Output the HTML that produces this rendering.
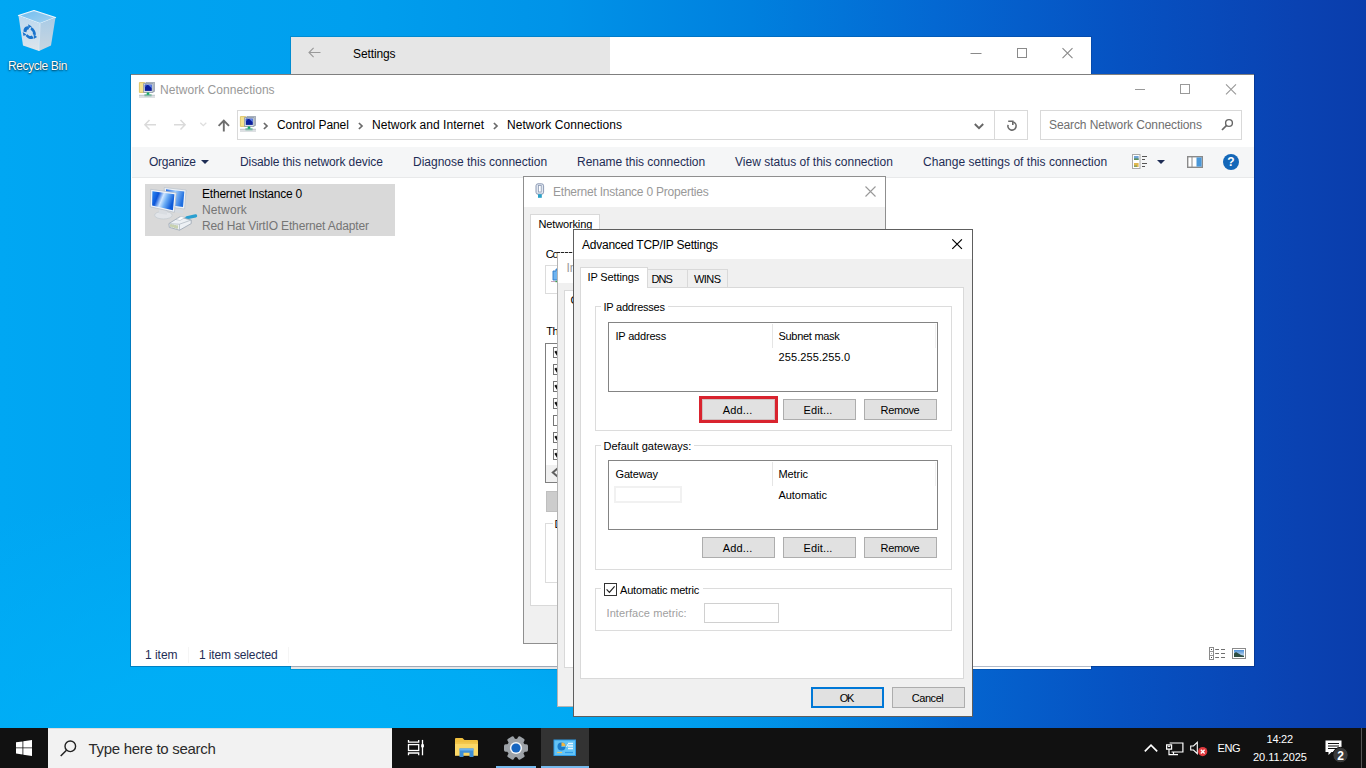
<!DOCTYPE html>
<html><head><meta charset="utf-8"><title>Desktop</title>
<style>
*{box-sizing:border-box;margin:0;padding:0}
html,body{width:1366px;height:768px;overflow:hidden}
body{position:relative;font-family:"Liberation Sans",sans-serif;font-size:12px;
 background:radial-gradient(ellipse 650px 330px at 330px 800px,rgba(0,177,247,.9) 0%,rgba(0,177,247,.75) 45%,rgba(0,177,247,0) 100%),linear-gradient(90deg,#00a7f3 0%,#00a4f1 7.3%,#009fee 25.6%,#0093e8 41%,#0080de 55%,#0468d2 68.4%,#0652c2 82%,#0a42b2 95%,#0a3dac 100%);}
.t{position:absolute;white-space:pre;line-height:16px;height:16px}
.b{position:absolute}
svg{position:absolute;overflow:visible}
.btn{position:absolute;background:#e1e1e1;border:1px solid #adadad;font-size:11px;line-height:19px;text-align:center;color:#000}

</style></head>
<body>
<svg style="left:14px;top:8px" width="46" height="46" viewBox="0 0 46 46">
<defs><linearGradient id="rb1" x1="0" y1="0" x2="0" y2="1"><stop offset="0" stop-color="#bdd8ee"/><stop offset=".6" stop-color="#cfe0ee"/><stop offset="1" stop-color="#dfe5ea"/></linearGradient>
<linearGradient id="rb2" x1="0" y1="0" x2="1" y2="1"><stop offset="0" stop-color="#6fbdf0"/><stop offset="1" stop-color="#a4d0ee"/></linearGradient>
<linearGradient id="rb3" x1="0" y1="0" x2="0" y2="1"><stop offset="0" stop-color="#a9cbe6"/><stop offset="1" stop-color="#c9d6e0"/></linearGradient></defs>
<path d="M4.500 7.500 L20 2.500 L41.500 9.500 L26 15.500 Z" fill="url(#rb2)" stroke="#eef6fc" stroke-width="1.300" stroke-linejoin="round"/>
<path d="M4.500 7.800 L26 15.600 L25 43 L9 37.500 Z" fill="url(#rb1)"/>
<path d="M26 15.600 L41.500 9.600 L37 37.500 L25 43 Z" fill="url(#rb3)"/>
<path d="M26 15.600L25 43" stroke="#e4eef6" stroke-width=".8"/>
<g transform="translate(15.700 24.600) skewY(16)">
<circle r="4.700" fill="none" stroke="#1a73cc" stroke-width="3" stroke-dasharray="6.900 2.940" transform="rotate(-75)"/>
<path d="M-1.500 -7.800l3.600 1.200 -3.300 2.600z M7.400 2.200l-3 2.600 -.6-4.200z M-6.200 5.300l-.8-4 3.800 1.400z" fill="#1a73cc"/>
</g>
</svg>
<span class="t" style="left:8px;top:58px;font-size:12px;color:#fff;letter-spacing:-0.4px;text-shadow:0 1px 2px rgba(0,0,0,.65),0 0 1px rgba(0,0,0,.5);">Recycle Bin</span>
<div class="b" style="left:291px;top:37px;width:800px;height:632px;background:#fff;box-shadow:0 0 0 1px rgba(0,0,0,.12)"></div>
<div class="b" style="left:291px;top:37px;width:319px;height:632px;background:#e6e6e6"></div>
<svg style="left:308px;top:47px" width="13" height="11" viewBox="0 0 13 11"><path d="M12.5 5.5H1M5.6 .8L1 5.5l4.6 4.7" fill="none" stroke="#999" stroke-width="1.1"/></svg>
<span class="t" style="left:353px;top:46px;font-size:12px;color:#000;letter-spacing:-0.11px;">Settings</span>
<svg style="left:970px;top:47px" width="104" height="12" viewBox="0 0 104 12"><path d="M.5 6.5h11" stroke="#8a8a8a" stroke-width="1" fill="none"/><rect x="47.5" y="1.5" width="9" height="9" fill="none" stroke="#8a8a8a"/><path d="M92.5 1.200l10 10M102.500 1.200l-10 10" stroke="#8a8a8a" stroke-width="1.100" fill="none"/></svg>
<div class="b" style="left:131px;top:75px;width:1123px;height:591px;background:#fff;box-shadow:0 0 0 1px rgba(0,30,80,.30)"></div>
<div class="b" style="left:131px;top:74px;width:1123px;height:1px;background:#7f7f7f"></div>
<svg style="left:139px;top:82px" width="16" height="16" viewBox="0 0 16 16"><path d="M.4 .6h5.200l1.300 1.300v8.500H.4z" fill="#f6e28e" stroke="#d9bd55" stroke-width=".8"/><rect x="7" y=".5" width="8.500" height="9" fill="#c5ccd5" stroke="#98a2ae" stroke-width=".8"/><rect x="4.600" y="1.600" width="9.400" height="8.800" fill="#d9dfe7" stroke="#8d98a6" stroke-width=".8"/><rect x="5.800" y="2.700" width="7" height="6.200" fill="#0b1f9c"/><path d="M9 2.700h3.800v3.600z" fill="#5f83e6"/><path d="M5.800 5.500l2.400-2.800H5.800z" fill="#3a5fd0"/><path d="M7.700 10.500h2.600v2h2.300v1.700H5.400v-1.700h2.300z" fill="#15a863"/><path d="M0 13.300h16" stroke="#b3bac2" stroke-width=".9"/><path d="M0 15h16" stroke="#b3bac2" stroke-width=".9"/></svg>
<span class="t" style="left:160px;top:82px;font-size:12px;color:#999;letter-spacing:0.03px;">Network Connections</span>
<svg style="left:1135px;top:84px" width="104" height="12" viewBox="0 0 104 12"><path d="M0 5.5h10" stroke="#999" stroke-width="1" fill="none"/><rect x="45.5" y=".5" width="9" height="9" fill="none" stroke="#999"/><path d="M91 .3l10 10M101 .3l-10 10" stroke="#999" stroke-width="1.1" fill="none"/></svg>
<svg style="left:144px;top:118px" width="90" height="14" viewBox="0 0 90 14"><path d="M12 6.800H.9M5.500 2L.9 6.800l4.600 4.800" fill="none" stroke="#dadada" stroke-width="1.500"/><path d="M30 6.800h11.100M36.500 2l4.600 4.800-4.600 4.800" fill="none" stroke="#dadada" stroke-width="1.500"/><path d="M56.300 4.700l3 3 3-3" fill="none" stroke="#dedede" stroke-width="1.300"/><path d="M79.800 13.600V2.800M74.600 7.800l5.200-5.200 5.200 5.200" fill="none" stroke="#6e6e6e" stroke-width="1.900"/></svg>
<div class="b" style="left:237px;top:110px;width:791px;height:30px;background:#fff;border:1px solid #d9d9d9"></div>
<svg style="left:240px;top:116px" width="16" height="16" viewBox="0 0 16 16"><path d="M.4 .6h5.200l1.300 1.300v8.500H.4z" fill="#f6e28e" stroke="#d9bd55" stroke-width=".8"/><rect x="7" y=".5" width="8.500" height="9" fill="#c5ccd5" stroke="#98a2ae" stroke-width=".8"/><rect x="4.600" y="1.600" width="9.400" height="8.800" fill="#d9dfe7" stroke="#8d98a6" stroke-width=".8"/><rect x="5.800" y="2.700" width="7" height="6.200" fill="#0b1f9c"/><path d="M9 2.700h3.800v3.600z" fill="#5f83e6"/><path d="M5.800 5.500l2.400-2.800H5.800z" fill="#3a5fd0"/><path d="M7.700 10.500h2.600v2h2.300v1.700H5.400v-1.700h2.300z" fill="#15a863"/><path d="M0 13.300h16" stroke="#b3bac2" stroke-width=".9"/><path d="M0 15h16" stroke="#b3bac2" stroke-width=".9"/></svg>
<svg style="left:263px;top:121.5px" width="5" height="8" viewBox="0 0 5 8"><path d="M.9 1L4 4 .9 7" fill="none" stroke="#6a6a6a" stroke-width="1.700"/></svg>
<span class="t" style="left:277px;top:117px;font-size:12px;color:#000;letter-spacing:-0.07px;">Control Panel</span>
<svg style="left:358px;top:121.5px" width="5" height="8" viewBox="0 0 5 8"><path d="M.9 1L4 4 .9 7" fill="none" stroke="#6a6a6a" stroke-width="1.700"/></svg>
<span class="t" style="left:372px;top:117px;font-size:12px;color:#000;letter-spacing:0.03px;">Network and Internet</span>
<svg style="left:493px;top:121.5px" width="5" height="8" viewBox="0 0 5 8"><path d="M.9 1L4 4 .9 7" fill="none" stroke="#6a6a6a" stroke-width="1.700"/></svg>
<span class="t" style="left:507px;top:117px;font-size:12px;color:#000;letter-spacing:0.05px;">Network Connections</span>
<svg style="left:974px;top:123px" width="10" height="7" viewBox="0 0 10 7"><path d="M.8 1l4.200 4.200L9.200 1" fill="none" stroke="#666" stroke-width="1.900"/></svg>
<div class="b" style="left:994px;top:111px;width:1px;height:28px;background:#d9d9d9"></div>
<svg style="left:1005px;top:118px" width="14" height="15" viewBox="0 0 14 15"><path d="M8.300 4.100A4.100 4.100 0 1 1 3.050 6.900" fill="none" stroke="#6a6a6a" stroke-width="1.600"/><path d="M3.200 3.300H7.800V6.900" fill="none" stroke="#6a6a6a" stroke-width="1.600"/></svg>
<div class="b" style="left:1040px;top:110px;width:202px;height:30px;background:#fff;border:1px solid #d9d9d9"></div>
<span class="t" style="left:1049px;top:117px;font-size:12px;color:#6f6f6f;letter-spacing:-0.1px;">Search Network Connections</span>
<svg style="left:1221px;top:118px" width="13" height="13" viewBox="0 0 13 13"><circle cx="8" cy="5" r="3.4" fill="none" stroke="#666" stroke-width="1.4"/><path d="M5.6 7.4L1 12" stroke="#666" stroke-width="1.7"/></svg>
<div class="b" style="left:132px;top:147px;width:1122px;height:31px;background:#f5f6f7;border-bottom:1px solid #e8e9ea"></div>
<span class="t" style="left:149px;top:154px;font-size:12px;color:#1e2d55;letter-spacing:-0.24px;">Organize</span>
<svg style="left:201px;top:160px" width="8" height="4" viewBox="0 0 8 4"><path d="M0 0h8L4 4z" fill="#1e2d55"/></svg>
<span class="t" style="left:240px;top:154px;font-size:12px;color:#1e2d55;letter-spacing:-0.1px;">Disable this network device</span>
<span class="t" style="left:413px;top:154px;font-size:12px;color:#1e2d55;letter-spacing:-0.0px;">Diagnose this connection</span>
<span class="t" style="left:577px;top:154px;font-size:12px;color:#1e2d55;letter-spacing:-0.03px;">Rename this connection</span>
<span class="t" style="left:735px;top:154px;font-size:12px;color:#1e2d55;letter-spacing:0.0px;">View status of this connection</span>
<span class="t" style="left:923px;top:154px;font-size:12px;color:#1e2d55;letter-spacing:0.02px;">Change settings of this connection</span>
<svg style="left:1132px;top:154px" width="16" height="16" viewBox="0 0 16 16"><rect x=".5" y=".5" width="7.5" height="14" fill="#fff" stroke="#aaa"/><rect x="2" y="2" width="4.6" height="4" fill="#6fa3d8"/><rect x="2" y="4.4" width="4.6" height="1.6" fill="#5c8f5a"/><rect x="2" y="9" width="4.6" height="4" fill="#e2b64d"/><rect x="2" y="11.4" width="3" height="1.6" fill="#8aa35c"/><path d="M10 2.5h5M10 5.5h3M10 9.5h5M10 12.5h3" stroke="#555" stroke-width="1"/></svg>
<svg style="left:1157px;top:160px" width="8" height="4" viewBox="0 0 8 4"><path d="M0 0h8L4 4z" fill="#1e2d55"/></svg>
<svg style="left:1187px;top:156px" width="16" height="12" viewBox="0 0 16 12"><rect x=".7" y=".7" width="14.6" height="10.6" fill="#fff" stroke="#8a8a8a" stroke-width="1.4"/><rect x="9.5" y="1.4" width="5.1" height="9.2" fill="#4a97d8"/><path d="M5 1v10" stroke="#8a8a8a" stroke-width="1"/></svg>
<div class="b" style="left:1223px;top:154px;width:16px;height:16px;border-radius:50%;background:#1467b8;color:#fff;font-weight:700;font-size:12px;line-height:16px;text-align:center">?</div>
<div class="b" style="left:145px;top:184px;width:250px;height:52px;background:#d9d9d9"></div>
<svg style="left:149px;top:185px" width="48" height="50" viewBox="0 0 48 50">
<defs><linearGradient id="sc" x1="0" y1="0" x2="1" y2=".35"><stop offset="0" stop-color="#2f8cf4"/><stop offset=".3" stop-color="#0d55d8"/><stop offset=".52" stop-color="#cfe6ff"/><stop offset=".7" stop-color="#6fb0f6"/><stop offset="1" stop-color="#0d5ad8"/></linearGradient>
<linearGradient id="sc2" x1="0" y1="0" x2="1" y2=".3"><stop offset="0" stop-color="#1a66e6"/><stop offset=".5" stop-color="#9fcbfb"/><stop offset="1" stop-color="#1f6fe0"/></linearGradient></defs>
<path d="M15.200 2.500l21.900 2.500-1.500 19L16 21.500z" fill="#eef2f6" stroke="#b9c2cc" stroke-width=".7"/>
<path d="M17 4.300l18.300 2.100-1.300 15.600L17.600 19.800z" fill="url(#sc2)"/>
<path d="M26 24l8 1.500v3l-8-1.200z" fill="#d5dae0"/>
<path d="M1.700 4.300l25.500 3.600-1.800 19.400L1.300 21.800z" fill="#f1f4f8" stroke="#b3bcc7" stroke-width=".7"/>
<path d="M3.400 6.200l22 3.100-1.500 16L3.100 20.400z" fill="url(#sc)"/>
<ellipse cx="14.400" cy="30.200" rx="8.800" ry="3.800" fill="#e2e5e9" stroke="#c2c8cf" stroke-width=".7"/>
<path d="M10 24.500l8 1.700v3.600l-8-1.400z" fill="#d9dde2"/>
<path d="M37.800 32.800L46.600 30.900" stroke="#2a9fd0" stroke-width="3.200" stroke-linecap="round"/>
<path d="M19.900 38.600L30.500 32l11.700 3v3.600L30.500 45.200 20.300 42.300z" fill="#eef3f7" fill-opacity=".9" stroke="#9aa6b2" stroke-width=".8"/>
<path d="M30.500 39.200l11.700-4.200M30.500 39.200v6M30.500 39.200L20 38.700" stroke="#aab4be" stroke-width=".7" fill="none"/>
<path d="M22 39.300v2.600M24 39.600v2.900M26 40v3.100M28 40.300v3.400" stroke="#8fa34a" stroke-width=".8"/>
<path d="M27 34.500l5-3 4 1-5 3z" fill="#fff" stroke="#b5bec8" stroke-width=".6"/>
</svg>
<span class="t" style="left:202px;top:186px;font-size:12px;color:#000;letter-spacing:-0.21px;">Ethernet Instance 0</span>
<span class="t" style="left:202px;top:202px;font-size:12px;color:#757575;letter-spacing:0.14px;">Network</span>
<span class="t" style="left:202px;top:218px;font-size:12px;color:#757575;letter-spacing:-0.14px;">Red Hat VirtIO Ethernet Adapter</span>
<span class="t" style="left:145px;top:647px;font-size:12px;color:#1e2d55;letter-spacing:-0.03px;">1 item</span>
<span class="t" style="left:199px;top:647px;font-size:12px;color:#1e2d55;letter-spacing:-0.15px;">1 item selected</span>
<div class="b" style="left:188px;top:647px;width:1px;height:16px;background:#f5f5f5"></div>
<div class="b" style="left:288px;top:647px;width:1px;height:16px;background:#f5f5f5"></div>
<svg style="left:1209px;top:647px" width="17" height="13" viewBox="0 0 17 13"><rect x=".5" y=".5" width="4" height="12" fill="#fff" stroke="#8a8a8a" stroke-width="1"/><path d="M.5 4.500h4M.5 8.500h4" stroke="#8a8a8a" stroke-width=".9"/><path d="M2 2.500h1M2 10.500h1" stroke="#444" stroke-width="1"/><path d="M2 6.500h1" stroke="#aaa" stroke-width="1"/><path d="M6.200 2.500h3.800M12 2.500h4M6.200 6.500h3.800M12 6.500h4M6.200 10.500h3.800M12 10.500h4" stroke="#707070" stroke-width="1"/></svg>
<svg style="left:1232px;top:648px" width="14" height="11" viewBox="0 0 14 11"><defs><linearGradient id="sky" x1="0" y1="0" x2="0" y2="1"><stop offset="0" stop-color="#4a8fd8"/><stop offset="1" stop-color="#dfeaf3"/></linearGradient></defs><rect x=".5" y=".5" width="13" height="10" fill="#fff" stroke="#8a8a8a"/><rect x="2" y="2" width="10" height="7" fill="url(#sky)"/><path d="M2 9V5.500l2-1.500 2.500 1.500L9 7l3 .8V9z" fill="#2f4f43"/></svg>
<div class="b" style="left:523px;top:176px;width:363px;height:468px;background:#f0f0f0;border:1px solid #8f8f8f"></div>
<div class="b" style="left:524px;top:177px;width:361px;height:30px;background:#fff"></div>
<svg style="left:535px;top:183px" width="10" height="16" viewBox="0 0 10 16"><rect x="1" y=".8" width="7.6" height="10.4" rx="2" fill="#e1e7f0" stroke="#8d9bb5" stroke-width="1"/><rect x="3.4" y="2.5" width="2.8" height="6.5" fill="#fff" stroke="#8d9bb5" stroke-width=".8"/><rect x="3" y="11.200" width="3.800" height="3.600" fill="#2aa0c8"/></svg>
<span class="t" style="left:553px;top:184px;font-size:12px;color:#999;letter-spacing:-0.22px;">Ethernet Instance 0 Properties</span>
<svg style="left:865px;top:186px" width="11" height="11" viewBox="0 0 11 11"><path d="M.5 .5l10 10M10.5 .5l-10 10" stroke="#999" stroke-width="1.1" fill="none"/></svg>
<div class="b" style="left:530px;top:232px;width:349px;height:374px;background:#fff;border:1px solid #d9d9d9"></div>
<div class="b" style="left:530px;top:214px;width:70px;height:19px;background:#fff;border:1px solid #d9d9d9;border-bottom:none"></div>
<span class="t" style="left:538.5px;top:216px;font-size:11px;color:#000;letter-spacing:-0.14px;">Networking</span>
<span class="t" style="left:545.8px;top:245.5px;font-size:11px;color:#000;letter-spacing:-1.13px;">Co</span>
<div class="b" style="left:545px;top:265px;width:320px;height:29px;background:#fff;border:1px solid #dcdcdc"></div>
<svg style="left:551px;top:269px" width="10" height="14" viewBox="0 0 10 14"><path d="M2 2h3V0h3v2h0v9H2z" fill="#6fb4f0" stroke="#2b78c8" stroke-width=".9"/><path d="M0 12.5h6" stroke="#c9a6c0" stroke-width="1"/><path d="M4.5 12.5h2.5" stroke="#3aa648" stroke-width="1.4"/></svg>
<span class="t" style="left:546.2px;top:323px;font-size:11px;color:#000;letter-spacing:-0.42px;">Th</span>
<div class="b" style="left:545px;top:343px;width:330px;height:140px;background:#fff;border:1px solid #7f7f7f"></div>
<div class="b" style="left:553px;top:347px;width:11px;height:11px;background:#fff;border:1px solid #757575"></div>
<svg style="left:553px;top:347px" width="11" height="11" viewBox="0 0 11 11"><path d="M2.300 4.200l2.600 4 4.500-6.500" fill="none" stroke="#111" stroke-width="2.200"/></svg>
<div class="b" style="left:553px;top:364px;width:11px;height:11px;background:#fff;border:1px solid #757575"></div>
<svg style="left:553px;top:364px" width="11" height="11" viewBox="0 0 11 11"><path d="M2.300 4.200l2.600 4 4.500-6.500" fill="none" stroke="#111" stroke-width="2.200"/></svg>
<div class="b" style="left:553px;top:381px;width:11px;height:11px;background:#fff;border:1px solid #757575"></div>
<svg style="left:553px;top:381px" width="11" height="11" viewBox="0 0 11 11"><path d="M2.300 4.200l2.600 4 4.500-6.500" fill="none" stroke="#111" stroke-width="2.200"/></svg>
<div class="b" style="left:553px;top:398px;width:11px;height:11px;background:#fff;border:1px solid #757575"></div>
<svg style="left:553px;top:398px" width="11" height="11" viewBox="0 0 11 11"><path d="M2.300 4.200l2.600 4 4.500-6.500" fill="none" stroke="#111" stroke-width="2.200"/></svg>
<div class="b" style="left:553px;top:415px;width:11px;height:11px;background:#fff;border:1px solid #757575"></div>
<div class="b" style="left:553px;top:432px;width:11px;height:11px;background:#fff;border:1px solid #757575"></div>
<svg style="left:553px;top:432px" width="11" height="11" viewBox="0 0 11 11"><path d="M2.300 4.200l2.600 4 4.500-6.500" fill="none" stroke="#111" stroke-width="2.200"/></svg>
<div class="b" style="left:553px;top:449px;width:11px;height:11px;background:#fff;border:1px solid #757575"></div>
<svg style="left:553px;top:449px" width="11" height="11" viewBox="0 0 11 11"><path d="M2.300 4.200l2.600 4 4.500-6.500" fill="none" stroke="#111" stroke-width="2.200"/></svg>
<div class="b" style="left:546px;top:465px;width:328px;height:17px;background:#f0f0f0"></div>
<svg style="left:551px;top:468px" width="7" height="9" viewBox="0 0 7 9"><path d="M6.500 .6L1.800 4.500 6.500 8.400" fill="none" stroke="#606060" stroke-width="2"/></svg>
<div class="b" style="left:546px;top:491px;width:73px;height:21px;background:#cccccc;border:1px solid #bfbfbf"></div>
<div class="b" style="left:545px;top:523px;width:330px;height:60px;border:1px solid #dcdcdc"></div>
<div class="b" style="left:553px;top:518px;width:60px;height:12px;background:#fff"></div>
<span class="t" style="left:554.5px;top:516px;font-size:11px;color:#000;">Description</span>
<div class="b" style="left:557px;top:252px;width:400px;height:455px;background:#f0f0f0;border:1px solid #b4b4b4"></div>
<div class="b" style="left:557px;top:252px;width:20px;height:1px;background:repeating-linear-gradient(90deg,#222 0 3px,#c8c8c8 3px 4px)"></div>
<div class="b" style="left:558px;top:253px;width:398px;height:30px;background:#fff"></div>
<span class="t" style="left:566.5px;top:260px;font-size:12px;color:#999;">Internet Protocol</span>
<div class="b" style="left:564px;top:290px;width:380px;height:378px;background:#fff;border:1px solid #d9d9d9"></div>
<span class="t" style="left:570.5px;top:292px;font-size:11px;color:#000;">C</span>
<div class="b" style="left:573px;top:229px;width:400px;height:488px;background:#f0f0f0;border:1px solid #5e5e5e"></div>
<div class="b" style="left:574px;top:230px;width:398px;height:29px;background:#fff"></div>
<span class="t" style="left:582px;top:237px;font-size:12px;color:#000;letter-spacing:-0.24px;">Advanced TCP/IP Settings</span>
<svg style="left:952px;top:239px" width="10" height="10" viewBox="0 0 10 10"><path d="M.3 .3l9.600 9.600M9.900 .3L.3 9.900" stroke="#000" stroke-width="1.2" fill="none"/></svg>
<div class="b" style="left:647px;top:269px;width:41px;height:19px;background:#f0f0f0;border:1px solid #d9d9d9"></div>
<div class="b" style="left:687px;top:269px;width:41px;height:19px;background:#f0f0f0;border:1px solid #d9d9d9"></div>
<div class="b" style="left:580px;top:287px;width:384px;height:392px;background:#fff;border:1px solid #d9d9d9"></div>
<div class="b" style="left:580px;top:267px;width:68px;height:21px;background:#fff;border:1px solid #d9d9d9;border-bottom:none"></div>
<span class="t" style="left:587.5px;top:269px;font-size:11px;color:#000;letter-spacing:-0.13px;">IP Settings</span>
<span class="t" style="left:651.5px;top:270.5px;font-size:11px;color:#000;letter-spacing:-0.91px;">DNS</span>
<span class="t" style="left:694px;top:270.5px;font-size:11px;color:#000;letter-spacing:-0.56px;">WINS</span>
<div class="b" style="left:595px;top:306px;width:357px;height:125px;border:1px solid #dcdcdc"></div>
<div class="b" style="left:601px;top:300px;width:67px;height:12px;background:#fff"></div>
<span class="t" style="left:603.5px;top:299px;font-size:11px;color:#000;letter-spacing:-0.23px;">IP addresses</span>
<div class="b" style="left:608px;top:322px;width:330px;height:70px;background:#fff;border:1px solid #848484"></div>
<div class="b" style="left:772px;top:324px;width:1px;height:24px;background:#e5e5e5"></div>
<div class="b" style="left:935px;top:324px;width:1px;height:24px;background:#f0f0f0"></div>
<span class="t" style="left:615.5px;top:327.5px;font-size:11px;color:#000;letter-spacing:-0.19px;">IP address</span>
<span class="t" style="left:778.5px;top:327.5px;font-size:11px;color:#000;letter-spacing:-0.29px;">Subnet mask</span>
<span class="t" style="left:778.5px;top:348.5px;font-size:11px;color:#000;letter-spacing:0.1px;">255.255.255.0</span>
<div class="b" style="left:699px;top:396px;width:79px;height:27px;border:3px solid #d9232e"></div>
<div class="btn" style="left:702px;top:399px;width:73px;height:21px;border-color:#cfc0c0"></div><span class="t" style="left:722.8px;top:402px;font-size:11px;color:#000;letter-spacing:0.16px;">Add...</span>
<div class="btn" style="left:783px;top:399px;width:73px;height:21px;"></div><span class="t" style="left:803.6px;top:402px;font-size:11px;color:#000;letter-spacing:0.11px;">Edit...</span>
<div class="btn" style="left:864px;top:399px;width:73px;height:21px;"></div><span class="t" style="left:880.6px;top:402px;font-size:11px;color:#000;letter-spacing:-0.39px;">Remove</span>
<div class="b" style="left:595px;top:445px;width:357px;height:125px;border:1px solid #dcdcdc"></div>
<div class="b" style="left:601px;top:439px;width:93px;height:12px;background:#fff"></div>
<span class="t" style="left:603.5px;top:438px;font-size:11px;color:#000;letter-spacing:0.03px;">Default gateways:</span>
<div class="b" style="left:608px;top:460px;width:330px;height:70px;background:#fff;border:1px solid #848484"></div>
<div class="b" style="left:772px;top:462px;width:1px;height:24px;background:#e5e5e5"></div>
<div class="b" style="left:935px;top:462px;width:1px;height:24px;background:#f0f0f0"></div>
<span class="t" style="left:615.5px;top:465.5px;font-size:11px;color:#000;letter-spacing:-0.17px;">Gateway</span>
<span class="t" style="left:778.5px;top:465.5px;font-size:11px;color:#000;letter-spacing:-0.08px;">Metric</span>
<span class="t" style="left:778.5px;top:487px;font-size:11px;color:#000;letter-spacing:-0.05px;">Automatic</span>
<div class="b" style="left:614px;top:486px;width:68px;height:17px;background:#fff;border:2px solid #f1f1f1"></div>
<div class="btn" style="left:702px;top:537px;width:73px;height:21px;"></div><span class="t" style="left:722.8px;top:540px;font-size:11px;color:#000;letter-spacing:0.16px;">Add...</span>
<div class="btn" style="left:783px;top:537px;width:73px;height:21px;"></div><span class="t" style="left:803.6px;top:540px;font-size:11px;color:#000;letter-spacing:0.11px;">Edit...</span>
<div class="btn" style="left:864px;top:537px;width:73px;height:21px;"></div><span class="t" style="left:880.6px;top:540px;font-size:11px;color:#000;letter-spacing:-0.39px;">Remove</span>
<div class="b" style="left:595px;top:588px;width:357px;height:43px;border:1px solid #dcdcdc"></div>
<div class="b" style="left:601px;top:582px;width:102px;height:14px;background:#fff"></div>
<div class="b" style="left:604px;top:583px;width:13px;height:13px;background:#fff;border:1px solid #333"></div>
<svg style="left:604px;top:583px" width="13" height="13" viewBox="0 0 13 13"><path d="M2.6 6.4l2.8 2.9 5.2-6" fill="none" stroke="#222" stroke-width="1.2"/></svg>
<span class="t" style="left:620px;top:582px;font-size:11px;color:#000;letter-spacing:-0.18px;">Automatic metric</span>
<span class="t" style="left:606.5px;top:605px;font-size:11px;color:#a0a0a0;letter-spacing:0.08px;">Interface metric:</span>
<div class="b" style="left:704px;top:603px;width:75px;height:20px;background:#fff;border:1px solid #d0d0d0"></div>
<div class="btn" style="left:811px;top:687px;width:73px;height:21px;border:2px solid #0078d7"></div><span class="t" style="left:839.8px;top:690px;font-size:11px;color:#000;letter-spacing:-1.45px;">OK</span>
<div class="btn" style="left:892px;top:687px;width:73px;height:21px;"></div><span class="t" style="left:911.7px;top:690px;font-size:11px;color:#000;letter-spacing:-0.43px;">Cancel</span>
<div class="b" style="left:0px;top:728px;width:1366px;height:40px;background:#111"></div>
<svg style="left:16px;top:740px" width="16" height="16" viewBox="0 0 16 16"><path d="M0 2.3l6.5-.9v6.1H0zM7.3 1.3L16 0v7.5H7.3zM0 8.3h6.5v6.2L0 13.6zM7.3 8.3H16V16l-8.7-1.2z" fill="#fff"/></svg>
<div class="b" style="left:48px;top:728px;width:344px;height:40px;background:#f2f2f2;border-top:1px solid #dcdcdc"></div>
<svg style="left:60px;top:740px" width="17" height="17" viewBox="0 0 17 17"><circle cx="10.3" cy="6.3" r="5.3" fill="none" stroke="#222" stroke-width="1.4"/><path d="M6.5 10.2L.7 16" stroke="#222" stroke-width="1.5"/></svg>
<span class="t" style="left:88.5px;top:741px;font-size:15px;color:#2b2b2b;letter-spacing:-0.29px;">Type here to search</span>
<svg style="left:407px;top:739px" width="22" height="18" viewBox="0 0 22 18"><g fill="none" stroke="#fff" stroke-width="1.300"><path d="M1.500 .9v2.300h10.200V.9"/><rect x="1.500" y="5.600" width="10.200" height="5.900"/><path d="M1.500 16.300v-2.300h10.200v2.300"/><path d="M15.500 .9v15.400"/></g><rect x="14.200" y="5.300" width="2.700" height="3" fill="#fff"/></svg>
<svg style="left:455px;top:738px" width="23" height="19" viewBox="0 0 23 19"><path d="M0 1.2C0 .5 .5 0 1.2 0h6.3l2 2H21.8c.7 0 1.2.5 1.2 1.2V17H0z" fill="#f0c040"/><path d="M0 4.5h23V17.800H0z" fill="#fbd867"/><path d="M0 4.500h23v1.300H0z" fill="#e9b32f" opacity=".55"/><path d="M4.500 10.500h14V19h-4v-4.200h-6V19h-4z" fill="#3f8fd6"/><path d="M4.500 10.500h14v2h-14z" fill="#6db3ee"/></svg>
<svg style="left:503px;top:735px" width="26" height="26" viewBox="-13 -13 26 26"><g fill="#9da2a7"><rect x="-3.700" y="-12" width="7.400" height="8" rx="1.600" transform="rotate(30)"/><rect x="-3.700" y="-12" width="7.400" height="8" rx="1.600" transform="rotate(90)"/><rect x="-3.700" y="-12" width="7.400" height="8" rx="1.600" transform="rotate(150)"/><rect x="-3.700" y="-12" width="7.400" height="8" rx="1.600" transform="rotate(210)"/><rect x="-3.700" y="-12" width="7.400" height="8" rx="1.600" transform="rotate(270)"/><rect x="-3.700" y="-12" width="7.400" height="8" rx="1.600" transform="rotate(330)"/></g><circle r="9.300" fill="#9da2a7"/><circle r="6.100" fill="#f4f6f8"/><circle r="4.600" fill="#1565c0"/></svg>
<div class="b" style="left:496px;top:766px;width:40px;height:2px;background:#76b9ed"></div>
<div class="b" style="left:541px;top:728px;width:48px;height:40px;background:#333"></div>
<div class="b" style="left:541px;top:766px;width:48px;height:2px;background:#76b9ed"></div>
<svg style="left:554px;top:740px" width="22" height="16" viewBox="0 0 22 16"><rect x="0" y="0" width="21.500" height="15.500" fill="#63c3f6"/><rect x="0" y="0" width="21.500" height="15.500" fill="none" stroke="#2f9be6" stroke-width="1"/><circle cx="7.500" cy="6.500" r="4" fill="#1a7ccc"/><path d="M7.500 6.500V2.500A4 4 0 0 1 11.500 6.500z" fill="#f2b643"/><path d="M7.500 6.500h4" stroke="#63c3f6" stroke-width=".8"/><path d="M14 3.500h5M14 6h5M14 8.500h5" stroke="#eaf7ff" stroke-width="1.400"/><path d="M12.500 7l1.500-3" stroke="#eaf7ff" stroke-width="1"/><path d="M3 12.500h5" stroke="#e9c46a" stroke-width="1.200"/><path d="M11 12.500h8" stroke="#2f9be6" stroke-width="1.200"/></svg>
<svg style="left:1144px;top:744px" width="14" height="8" viewBox="0 0 14 8"><path d="M.8 7.400L7 1.200l6.200 6.200" fill="none" stroke="#fff" stroke-width="1.600"/></svg>
<svg style="left:1166px;top:742px" width="18" height="15" viewBox="0 0 18 15"><g fill="none" stroke="#fff" stroke-width="1.200"><path d="M3.600 1h13.300v9H5.500"/><path d="M.6 2.800h5v4.400h-5z"/><path d="M3 7.200v5.500h9M7.500 10v2.700"/><path d="M1.800 4.300h2.400"/></g></svg>
<svg style="left:1190px;top:741px" width="18" height="16" viewBox="0 0 18 16"><path d="M.7 5h2.800l3.800-3.700v11.400L3.500 9H.7z" fill="none" stroke="#fff" stroke-width="1.100"/><circle cx="12.700" cy="10.600" r="4.600" fill="#e03a3e"/><path d="M10.800 8.700l3.800 3.800M14.600 8.700l-3.800 3.800" stroke="#fff" stroke-width="1.300"/></svg>
<span class="t" style="left:1217.5px;top:740px;font-size:11px;color:#fff;letter-spacing:-0.45px;">ENG</span>
<span class="t" style="left:1266.5px;top:731px;font-size:11px;color:#fff;letter-spacing:-0.23px;">14:22</span>
<span class="t" style="left:1253px;top:749px;font-size:11px;color:#fff;letter-spacing:-0.03px;">20.11.2025</span>
<svg style="left:1325px;top:740px" width="25" height="24" viewBox="0 0 25 24"><path d="M.5 .5h16v11.500H6.500L3.500 15v-3H.5z" fill="#fff"/><path d="M3 3.500h11M3 6h11M3 8.500h11" stroke="#111" stroke-width="1"/><circle cx="15.500" cy="15" r="7.700" fill="#3a3a3a" stroke="#111" stroke-width="1"/></svg>
<span class="t" style="left:1337.3px;top:747.5px;font-size:12px;color:#fff;font-weight:700;">2</span>
<div class="b" style="left:1361px;top:728px;width:1px;height:40px;background:#555"></div>
</body></html>
